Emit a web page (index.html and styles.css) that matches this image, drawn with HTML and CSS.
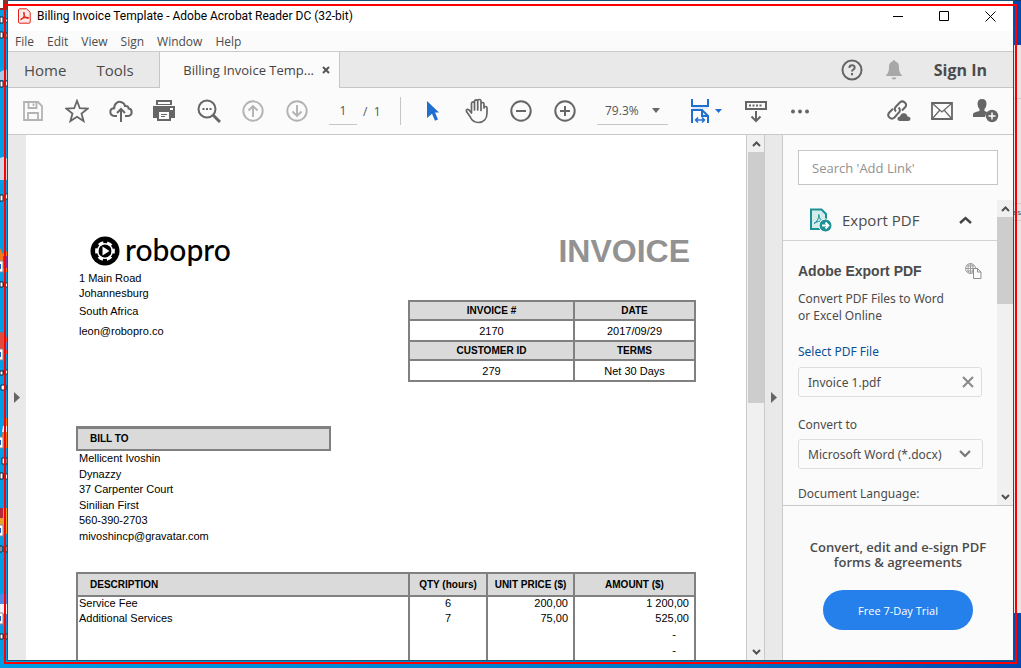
FILE: index.html
```html
<!DOCTYPE html>
<html lang="en">
<head>
<meta charset="utf-8">
<title>Billing Invoice Template - Adobe Acrobat Reader DC (32-bit)</title>
<link rel="stylesheet" href="styles.css">
</head>
<body class="desktop">
<svg class="desktop-icons" width="8" height="668" viewBox="0 0 8 668" aria-hidden="true">
  <rect width="8" height="10" fill="#8a3030"/><rect width="3" height="8" fill="#fff"/>
  <g fill="#fff" stroke="#123" stroke-width="1"><path d="M0 17h3v6H0zM5 19h3v3H5zM0 32h3v6H0zM4 33h3v5H4zM0 81h3v6H0zM5 81h3v5H5zM0 195h3v6H0zM5 194h3v5H5zM0 282h3v5H0zM4 283h4v4H4zM0 371h3v4H0zM4 370h4v4H4zM1 385h5v5H1zM2 458h5v6H2zM0 473h3v6H0zM4 474h4v5H4zM0 546h2v6H0zM4 546h3v6H4zM0 634h3v5H0zM4 634h3v5H4z"/></g>
  <path d="M0 72q5-3 8-2v10H0z" fill="#a9cbe8"/><path d="M0 158q7-3 8 4v18H0z" fill="#cdd6e2"/>
  <path d="M0 248l3 6 5-4v22H0z" fill="#f07820"/><path d="M3 256h5v12H3z" fill="#8a35a8"/>
  <path d="M0 332q5 0 8 8v14H0z" fill="#e24a3b"/><circle cx="8" cy="346" r="4" fill="#4a86e8"/>
  <path d="M5 418h3v30H0z" fill="#ec7a1c"/><path d="M3 426h5v6H2z" fill="#eee"/>
  <path d="M0 508h8v26H0z" fill="#e2a32c"/><path d="M0 508h3v10H0z" fill="#b3283a"/>
  <rect y="594" width="8" height="10" fill="#4d8be8"/><rect y="604" width="8" height="10" fill="#eef4fb"/><rect y="614" width="8" height="12" fill="#4286dc"/>
  <g fill="#fff" stroke="#888"><path d="M-1 261h4v11h-4zM-1 349h4v11h-4zM-1 437h4v11h-4zM-1 525h4v11h-4zM-1 613h4v11h-4z"/></g>
  <path d="M0 264h1v5H0zM0 352h1v5H0zM0 440h1v5H0zM0 528h1v5H0zM0 616h1v5H0z" fill="#1a5bb5"/>
</svg>
<div class="behind"><span class="behind-text">es</span></div>

<main class="window">
  <header class="titlebar">
    <svg class="app-icon" width="13" height="16" viewBox="0 0 13 16" fill="none" stroke="#e2231a">
      <path d="M1.500 .8h7l3.700 3.500v9.900q0 1-1 1H1.500q-1 0-1-1V1.800q0-1 1-1z" fill="#fde9e7"/>
      <path d="M3 11.500C5 10.500 6.500 7.500 6.300 5.300 6.200 4 5.400 4.500 5.700 5.600 6.200 7.700 8 10 9.800 10.300c1 0 .8-1-.4-1C7 9.300 3.400 10.300 3 11.300z" stroke-width="1.200"/>
    </svg>
    <h1 class="title">Billing Invoice Template - Adobe Acrobat Reader DC (32-bit)</h1>
    <div class="window-buttons">
      <button aria-label="Minimize"><svg width="11" height="11" stroke="#000"><path d="M0 5.500h10"/></svg></button>
      <button aria-label="Maximize"><svg width="11" height="11" fill="none" stroke="#000"><path d="M.5 .5h9v9h-9z"/></svg></button>
      <button aria-label="Close"><svg width="11" height="11" stroke="#000"><path d="M.5 .5l10 10M10.500 .5l-10 10"/></svg></button>
    </div>
  </header>

  <nav class="menubar">
    <button>File</button><button>Edit</button><button>View</button><button>Sign</button><button>Window</button><button>Help</button>
  </nav>

  <div class="tabs">
    <div class="tabs-left"><button class="tab">Home</button><button class="tab">Tools</button></div>
    <div class="doc-tab"><span>Billing Invoice Temp...</span>
      <button aria-label="Close tab"><svg width="8" height="8" stroke="#555" stroke-width="2"><path d="M1 1l6 6M7 1L1 7"/></svg></button></div>
    <div class="tabs-right">
      <button aria-label="Help"><svg width="22" height="22" viewBox="0 0 22 22" fill="none" stroke="#666" stroke-width="2"><circle cx="11" cy="11" r="9.500"/><path d="M8.300 8.800q.2-2.500 2.700-2.500t2.700 2.200q0 1.300-1.400 2.100-1.300.8-1.300 2"/><path d="M11 14v2.200"/></svg></button>
      <button aria-label="Notifications"><svg width="18" height="20" viewBox="0 0 18 20" fill="#a8a8a8"><path d="M9 0q1.300 0 1.400 1.500C13.500 2.300 14 5 14 7.500c0 4.500 1.500 6 3.300 8.500H.7C2.500 13.500 4 12 4 7.500 4 5 4.500 2.300 7.600 1.500Q7.700 0 9 0zM6.500 17.500h5q-.5 2-2.500 2t-2.500-2z"/></svg></button>
      <button class="sign-in">Sign In</button>
    </div>
  </div>

  <div class="toolbar">
    <div class="tools">
      <button class="tool" aria-label="Save"><svg width="22" height="22" viewBox="0 0 22 22" fill="none" stroke="#b3b3b3" stroke-width="1.800"><path d="M2 2h14l4 4v14H2z"/><path d="M6.500 2v6h8V2M6 20v-7h10v7"/><path d="M11.500 3.500v2.500"/></svg></button>
      <button class="tool" aria-label="Star"><svg width="24" height="24" viewBox="0 0 24 24" fill="none" stroke="#666" stroke-width="1.800"><path d="M12 1.800l2.800 7.400 7.800.4-6.100 4.900 2.100 7.600L12 17.800l-6.600 4.300 2.100-7.600-6.100-4.900 7.800-.4z"/></svg></button>
      <button class="tool" aria-label="Upload"><svg width="24" height="24" viewBox="0 0 24 24" fill="none" stroke="#666" stroke-width="2"><path d="M8 17H5.500C0 16.500 0 9.500 5.200 9.300 5 4 9.500 2 12.500 3.200c2 .6 3.200 2 3.500 3.800 2-.4 3.500.6 3.600 2.600C23.500 10 24 16.500 19 17h-3"/><path d="M12 23V10.500M8 14l4-4 4 4"/></svg></button>
      <button class="tool" aria-label="Print"><svg width="24" height="24" viewBox="0 0 24 24" fill="#666"><path d="M3 1h16v5H3z"/><path d="M5 3h12v2H5z" fill="#fbfbfb"/><path fill-rule="evenodd" d="M0 7h22v12h-4v3H4v-3H0zm17 2v2h3V9zM6 13v7h10v-7z"/><path d="M8 15h6v1H8zM8 17h4v1H8z"/></svg></button>
      <button class="tool" aria-label="Find"><svg width="24" height="24" viewBox="0 0 24 24" fill="none" stroke="#666" stroke-width="2"><circle cx="10" cy="10" r="8.500"/><path d="M16 16l7 7" stroke-width="3"/><path d="M5.500 10h9" stroke-dasharray="2 1.500"/></svg></button>
      <button class="tool" aria-label="Previous page"><svg width="22" height="22" viewBox="0 0 22 22" fill="none" stroke="#b3b3b3" stroke-width="1.900"><circle cx="11" cy="11" r="9.700"/><path d="M11 17V6M6.500 10.500L11 6l4.500 4.500"/></svg></button>
      <button class="tool" aria-label="Next page"><svg width="22" height="22" viewBox="0 0 22 22" fill="none" stroke="#b3b3b3" stroke-width="1.900"><circle cx="11" cy="11" r="9.700"/><path d="M11 5v11M6.500 11.500L11 16l4.500-4.500"/></svg></button>
    </div>
    <div class="pager"><input class="page-input" value="1" aria-label="Page number"><span>/&nbsp; 1</span></div>
    <div class="tools view-tools">
      <button class="tool" aria-label="Select"><svg width="14" height="22" viewBox="0 0 14 22" fill="#1f6fd0"><path d="M1 1l12 11.500H9l3 7-3 1.300-3-7-5 4.200z"/></svg></button>
      <button class="tool" aria-label="Hand"><svg width="24" height="26" viewBox="0 0 24 26" fill="none" stroke="#666" stroke-width="1.700" stroke-linecap="round" stroke-linejoin="round"><path d="M6.500 15V5.500q0-1.700 1.500-1.700t1.500 1.700V12 3.500q0-1.700 1.600-1.700t1.600 1.700V12 3q0-1.500 1.600-1.500T16 3v9.500V6q0-1.500 1.500-1.500T19 6v4q0-1.500 1.500-1.500T22 10v5c0 6-3.500 9.500-8.500 9.500-4.500 0-7-2.500-8.500-6L1.500 13.500q-.5-2 1.200-2.200 1 0 1.800 1.200z"/></svg></button>
      <button class="tool" aria-label="Zoom out"><svg width="22" height="22" viewBox="0 0 22 22" fill="none" stroke="#666" stroke-width="2"><circle cx="11" cy="11" r="9.700"/><path d="M6 11h10"/></svg></button>
      <button class="tool" aria-label="Zoom in"><svg width="22" height="22" viewBox="0 0 22 22" fill="none" stroke="#666" stroke-width="2"><circle cx="11" cy="11" r="9.700"/><path d="M6 11h10M11 6v10"/></svg></button>
    </div>
    <div class="zoom-box"><select aria-label="Zoom level"><option>79.3%</option></select><svg width="8" height="5" fill="#666"><path d="M0 0h8L4 5z"/></svg></div>
    <div class="tools">
      <button class="tool tool-wide" aria-label="Page fit"><svg width="18" height="26" viewBox="0 0 18 26" fill="none" stroke="#1f6fd0" stroke-width="2"><path d="M1 1v7h16V1M1 25V12h10l6 6v7M11 12v6h6"/><path d="M1 10h16" stroke="#bcd6f3" stroke-width="1"/><path d="M4.500 22h9M7 19.500L4.500 22 7 24.500M11 19.500l2.500 2.500-2.500 2.500" stroke-width="1.500"/></svg><svg width="7" height="4" fill="#1f6fd0"><path d="M0 0h7L3.500 4z"/></svg></button>
      <button class="tool" aria-label="Reading mode"><svg width="24" height="24" viewBox="0 0 24 24" fill="none" stroke="#666" stroke-width="2"><path d="M2 3h20v7H2z"/><path d="M5 6.500h14" stroke-dasharray="2 1.500"/><path d="M12 12v9.500M7.500 17.500L12 22l4.500-4.500"/></svg></button>
      <button class="tool" aria-label="More tools"><svg width="20" height="5" fill="#666"><circle cx="3" cy="2.500" r="2"/><circle cx="10" cy="2.500" r="2"/><circle cx="17" cy="2.500" r="2"/></svg></button>
    </div>
    <div class="tools tools-end">
      <button class="tool" aria-label="Share link"><svg width="25" height="24" viewBox="0 0 25 24" fill="none" stroke="#666" stroke-width="2"><path d="M10 12.500q-2.500-2.500 0-5l3.800-4q2.500-2.300 5 0t.3 4.800L16 11.500"/><path d="M12.500 8.500q2.700 2.500.2 5.200l-4.200 4.800q-2.500 2.300-5 0t-.2-5L7 9.800"/><path d="M14 22q-3-.5-2.500-3 .6-1.800 2.500-1.500 1-3.500 4-3.200 3 .2 3.500 3.200 3 .3 3 2.500 0 2-2.500 2z" fill="#666" stroke="none"/></svg></button>
      <button class="tool" aria-label="Email"><svg width="22" height="18" viewBox="0 0 22 18" fill="none" stroke="#666" stroke-width="1.800"><path d="M1 1h20v16H1z"/><path d="M1.500 1.500L11 10l9.500-8.500M1.500 16.500l7-8M20.500 16.500l-7-8" stroke-width="1.200"/></svg></button>
      <button class="tool" aria-label="Add people"><svg width="26" height="24" viewBox="0 0 26 24" fill="#666"><path d="M9 0q4.500 0 4.500 5 0 3-2 5v2l3 1.200Q12 15 12 18H0v-3q0-1.500 6.500-3v-2q-2-2-2-5Q4.500 0 9 0z"/><circle cx="19" cy="17" r="6.200"/><path d="M15.500 17h7M19 13.500v7" stroke="#fff" stroke-width="1.500"/></svg></button>
    </div>
  </div>

  <div class="workspace">
    <button class="rail rail-left" aria-label="Open navigation pane"><svg width="6" height="11" fill="#666"><path d="M0 0v11l6-5.500z"/></svg></button>
    <section class="viewport">
      <article class="invoice">
        <div class="masthead">
          <div>
            <div class="logo">
              <svg width="30" height="30" viewBox="0 0 30 30"><circle cx="15" cy="15" r="14.500"/><circle cx="15" cy="15" r="8.300" fill="none" stroke="#fff" stroke-width="3.200" stroke-dasharray="4.900 3.790" stroke-dashoffset="2.450"/><circle cx="15" cy="15" r="7.300" fill="none" stroke="#fff" stroke-width="1.500"/><path d="M12.500 10.500v9l7-4.500z" fill="#fff"/></svg>
              <span class="logo-name">robopro</span>
            </div>
            <ul class="address"><li>1 Main Road</li><li>Johannesburg</li><li class="tall">South Africa</li><li class="tall">leon@robopro.co</li></ul>
          </div>
          <div>
            <h2 class="invoice-title">INVOICE</h2>
            <table class="summary">
              <colgroup><col class="col-id"><col></colgroup>
              <tr><th>INVOICE #</th><th>DATE</th></tr>
              <tr><td>2170</td><td>2017/09/29</td></tr>
              <tr><th>CUSTOMER ID</th><th>TERMS</th></tr>
              <tr><td>279</td><td>Net 30 Days</td></tr>
            </table>
          </div>
        </div>
        <section class="bill-to">
          <h3>BILL TO</h3>
          <ul class="address client"><li>Mellicent Ivoshin</li><li>Dynazzy</li><li>37 Carpenter Court</li><li>Sinilian First</li><li>560-390-2703</li><li>mivoshincp@gravatar.com</li></ul>
        </section>
        <table class="items">
          <colgroup><col class="col-desc"><col class="col-qty"><col class="col-price"><col></colgroup>
          <thead><tr><th class="desc">DESCRIPTION</th><th>QTY (hours)</th><th>UNIT PRICE ($)</th><th>AMOUNT ($)</th></tr></thead>
          <tbody>
            <tr><td>Service Fee</td><td class="qty">6</td><td class="num">200,00</td><td class="num">1 200,00</td></tr>
            <tr><td>Additional Services</td><td class="qty">7</td><td class="num">75,00</td><td class="num">525,00</td></tr>
            <tr><td></td><td></td><td></td><td class="num nil">-</td></tr>
            <tr><td></td><td></td><td></td><td class="num nil">-</td></tr>
            <tr><td></td><td></td><td></td><td></td></tr>
          </tbody>
        </table>
      </article>
    </section>
    <div class="scrollbar doc-scroll">
      <svg width="9" height="6" fill="none" stroke="#505050" stroke-width="2"><path d="M1 5l3.500-3.500L8 5"/></svg>
      <div class="track"><div class="thumb"></div></div>
      <svg width="9" height="6" fill="none" stroke="#505050" stroke-width="2"><path d="M1 1l3.500 3.500L8 1"/></svg>
    </div>
    <button class="rail rail-right" aria-label="Close tools pane"><svg width="6" height="11" fill="#666"><path d="M0 0v11l6-5.500z"/></svg></button>

    <aside class="panel">
      <input class="search" type="search" placeholder="Search 'Add Link'" aria-label="Search tools">
      <div class="panel-body">
        <div class="export">
          <button class="export-head">
            <svg width="24" height="24" viewBox="0 0 24 24" fill="none"><path d="M3 1.500h10.500L18 6v15H3z" fill="#d3ecec" stroke="#1c9296" stroke-width="2"/><path d="M6 15.500c3-1.500 5-5 4.800-9 .3 4 1.700 6 5 6.500-4-.3-7 .7-9.800 2.500z" stroke="#1c9296"/><circle cx="17.500" cy="17.500" r="6.500" fill="#1c9296" stroke="#fbfbfb"/><path d="M14 17.500h6M17.500 14.500l3 3-3 3" stroke="#fff" stroke-width="1.800"/></svg>
            <span>Export PDF</span>
            <svg width="13" height="8" fill="none" stroke="#444" stroke-width="2.400"><path d="M1 7l5.500-5L12 7"/></svg>
          </button>
          <div class="export-form">
            <div class="export-title"><h3>Adobe Export PDF</h3>
              <svg width="17" height="16" viewBox="0 0 17 16" fill="none" stroke="#a0a0a0"><circle cx="5.500" cy="5.500" r="5"/><path d="M.5 5.500h10M5.500 .5v10M1.500 3h8M1.500 8h8"/><ellipse cx="5.500" cy="5.500" rx="2.500" ry="5"/><path d="M8.500 5.500h4l3.500 3.500v6.500H8.500z" fill="#fbfbfb" stroke="#8f8f8f"/><path d="M12.500 5.500V9H16" stroke="#8f8f8f"/></svg></div>
            <p class="blurb">Convert PDF Files to Word<br>or Excel Online</p>
            <a class="select-file" href="#file">Select PDF File</a>
            <div class="file-box" id="file"><span>Invoice 1.pdf</span><button aria-label="Remove file"><svg width="12" height="12" stroke="#888" stroke-width="2"><path d="M1 1l10 10M11 1L1 11"/></svg></button></div>
            <label class="field-label" for="format">Convert to</label>
            <div class="format-box"><select id="format"><option>Microsoft Word (*.docx)</option></select><svg width="12" height="8" fill="none" stroke="#777" stroke-width="2.200"><path d="M1 1l5 5 5-5"/></svg></div>
            <p class="field-label last">Document Language:</p>
          </div>
        </div>
        <div class="scrollbar panel-scroll">
          <svg width="9" height="6" fill="none" stroke="#505050" stroke-width="2"><path d="M1 5l3.500-3.500L8 5"/></svg>
          <div class="track"><div class="thumb"></div></div>
          <svg width="9" height="6" fill="none" stroke="#505050" stroke-width="2"><path d="M1 1l3.500 3.500L8 1"/></svg>
        </div>
      </div>
      <footer class="promo"><p>Convert, edit and e-sign PDF<br>forms &amp; agreements</p><button>Free 7-Day Trial</button></footer>
    </aside>
  </div>
</main>
<div class="capture-frame"></div>
</body>
</html>
```
FILE: styles.css
```css
* { box-sizing: border-box; }
h1, h2, h3, p, ul { margin: 0; padding: 0; font-weight: 400; }
ul { list-style: none; }
svg { display: block; flex: none; }
button, input, select { margin: 0; padding: 0; border: 0; border-radius: 0; background: none; color: inherit; font: inherit; appearance: none; outline: none; }
button { display: flex; align-items: center; justify-content: center; }

.desktop {
  position: relative;
  display: flex;
  height: 100vh;
  margin: 0;
  padding: 1px 8px 8px;
  overflow: hidden;
  background: linear-gradient(90deg, #009ee6, #0078c8 65%, #0248b0);
  color: #4b4b4b;
  font-family: "Open Sans", "Noto Sans", sans-serif;
  font-size: 12px;
}
.desktop::before { content: ""; position: absolute; inset: 0 0 auto; height: 1px; background: #17375e; }
.desktop-icons { position: absolute; left: 0; top: 0; }
.behind { position: absolute; right: 0; top: 45px; bottom: 55px; width: 9px; padding-top: 158px; background: #e6e6e6; color: #444; font-size: 8px; line-height: 16px; text-align: right; }
.behind::before { content: ""; position: absolute; left: 0; right: 0; top: 53px; height: 1px; background: #ccc; }
.behind-text { display: block; border-block: 1px solid #ccc; }
.capture-frame { position: absolute; inset: 4px; border: 2px solid #f00; pointer-events: none; }

.window { position: relative; display: flex; flex: 1; min-width: 0; flex-direction: column; background: #fbfbfb; box-shadow: 0 0 0 1px #1c5478; }

.titlebar { display: flex; height: 30px; align-items: center; gap: 6px; padding-left: 10px; background: #fff; }
.title { flex: 1; color: #000; font-family: Roboto, "Open Sans", sans-serif; font-size: 12px; white-space: nowrap; }
.window-buttons { display: flex; }
.window-buttons button { width: 46px; height: 30px; }

.menubar { display: flex; height: 20px; align-items: center; gap: 13px; padding-left: 7px; }

.tabs { display: flex; height: 37px; border-top: 1px solid #cbcbcb; background: #e9e9e9; }
.tabs-left { display: flex; width: 152px; padding-left: 16px; gap: 30px; border-right: 1px solid #c6c6c6; border-bottom: 1px solid #c6c6c6; }
.tab { font-size: 15px; }
.doc-tab { display: flex; width: 179px; align-items: center; justify-content: flex-end; gap: 8px; padding-right: 9px; background: #fbfbfb; font-size: 13px; color: #444; white-space: nowrap; }
.tabs-right { display: flex; flex: 1; align-items: center; justify-content: flex-end; gap: 22px; padding-right: 26px; border-left: 1px solid #c6c6c6; border-bottom: 1px solid #c6c6c6; }
.sign-in { margin-left: 9px; font-size: 16px; font-weight: 700; }

.toolbar { display: flex; height: 47px; align-items: center; border-bottom: 1px solid #c9c9c9; padding: 0 5px 0 3px; color: #555; }
.tools { display: flex; }
.tool { width: 44px; height: 44px; }
.tool-wide { width: 56px; gap: 6px; }
.tools-end { margin-left: auto; }
.pager { display: flex; width: 72px; height: 28px; margin-left: 10px; gap: 6px; align-items: center; border-right: 1px solid #c6c6c6; }
.page-input { width: 28px; height: 28px; border-bottom: 1px solid #c6c6c6; text-align: center; }
.view-tools { margin-left: 10px; }
.zoom-box { display: grid; width: 71px; height: 28px; margin: 0 10px; align-items: center; border-bottom: 1px solid #c6c6c6; }
.zoom-box select { grid-area: 1 / 1; padding-left: 8px; }
.zoom-box svg { grid-area: 1 / 1; justify-self: end; margin-right: 8px; pointer-events: none; }

.workspace { display: flex; flex: 1; min-height: 0; }
.rail { width: 18px; background: #e9e9e9; }
.rail-right { width: 19px; border-left: 1px solid #c9c9c9; border-right: 1px solid #c9c9c9; }
.viewport { flex: 1; min-width: 0; overflow: hidden; background: #fff; }
.scrollbar { display: flex; flex-direction: column; align-items: center; background: #f0f0f0; }
.track { flex: 1; width: 100%; }
.thumb { background: #cdcdcd; }
.doc-scroll { width: 18px; border-left: 1px solid #c9c9c9; padding: 6px 0 5px 1px; gap: 5px; }
.doc-scroll .thumb { height: 51%; }

.invoice { width: 620px; margin-left: 50px; padding-top: 96px; color: #000; font: 11px "Liberation Sans", Arial, sans-serif; }
.masthead { display: grid; grid-template-columns: 332px 288px; }
.logo { display: flex; height: 39px; padding-left: 14px; gap: 5px; align-items: center; }
.logo-name { padding-bottom: 4px; font: 500 30px/30px Lato, sans-serif; }
.address { padding-left: 3px; line-height: 15px; }
.address li:nth-child(odd) { line-height: 16px; }
.address .tall:nth-child(n) { line-height: 20px; }
.client li:nth-child(odd) { line-height: 15px; }
.client li:nth-child(even) { line-height: 16px; }
.invoice-title { height: 69px; padding-right: 6px; color: #929292; font-size: 32px; font-weight: 700; line-height: 40px; text-align: right; }
table { width: 100%; border-collapse: collapse; table-layout: fixed; }
th, td { padding: 0; border: 2px solid #808080; }
th { background: #dadada; font-size: 10px; }
.summary { height: 82px; text-align: center; }
.col-id { width: 165px; }
.bill-to { margin-top: 44px; }
.bill-to h3 { width: 255px; padding-left: 12px; border: 2px solid #808080; border-top-width: 3px; background: #dadada; font-size: 10px; font-weight: 700; line-height: 20px; }
.items { margin-top: 28px; }
.items th { height: 23px; }
.items .desc { padding-left: 12px; text-align: left; }
.items td { height: 16px; padding: 0 5px 0 1px; border-block: 0; line-height: 12px; vertical-align: top; }
.col-desc { width: 332px; }
.col-qty { width: 78px; }
.col-price { width: 87px; }
.items .qty { padding: 0; text-align: center; }
.num { text-align: right; }
.items .nil { padding-right: 18px; }

.panel { display: flex; width: 230px; flex-direction: column; }
.search { width: 200px; height: 35px; margin: 15px 0 15px 15px; padding: 0 13px; border: 1px solid #c6c6c6; background: #fff; font-size: 13px; }
.search::placeholder { color: #919191; }
.panel-body { display: flex; flex: 1; min-height: 0; border-bottom: 1px solid #c9c9c9; }
.export { flex: 1; overflow: hidden; }
.export-head { display: flex; width: 100%; height: 41px; padding: 0 25px; gap: 10px; border-bottom: 1px solid #d3d3d3; font-size: 15px; }
.export-head span { flex: 1; text-align: left; }
.export-form { display: flex; flex-direction: column; padding: 20px 15px 0; font-family: "Noto Sans", "Open Sans", sans-serif; font-size: 12px; }
.export-title { display: flex; height: 20px; align-items: center; justify-content: space-between; }
.export-title h3 { font: 700 14px "Liberation Sans", Arial, sans-serif; }
.blurb { margin-top: 9px; line-height: 17px; white-space: nowrap; }
.select-file { margin-top: 19px; color: #0d4f94; line-height: 17px; text-decoration: none; }
.file-box, .format-box { height: 30px; border: 1px solid #dedede; border-radius: 3px; }
.file-box { display: flex; margin-top: 7px; padding: 0 7px 0 9px; align-items: center; justify-content: space-between; }
.field-label { margin-top: 19px; line-height: 17px; }
.format-box { display: grid; width: 185px; margin-top: 6px; align-items: center; }
.format-box select { grid-area: 1 / 1; padding-left: 9px; }
.format-box svg { grid-area: 1 / 1; justify-self: end; margin-right: 11px; pointer-events: none; }
.last { margin-top: 16px; }
.panel-scroll { width: 16px; padding: 6px 0 5px; gap: 5px; }
.panel-scroll .thumb { height: 32%; }
.promo { display: flex; flex-direction: column; height: 154px; align-items: center; gap: 20px; padding-top: 34px; text-align: center; }
.promo p { font-size: 13px; font-weight: 600; line-height: 15px; }
.promo button { width: 150px; height: 40px; border-radius: 20px; background: #2680eb; color: #fff; font-size: 11px; }
```
